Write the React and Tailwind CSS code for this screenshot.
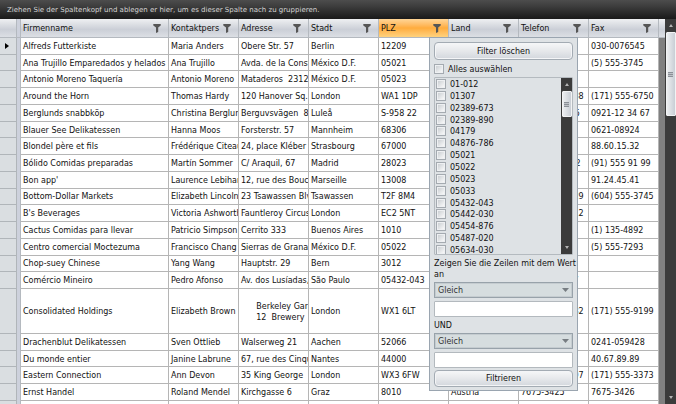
import React from "react";

const columns = ["Firmenname", "Kontaktpers", "Adresse", "Stadt", "PLZ", "Land", "Telefon", "Fax"];

const rows = [
  ["Alfreds Futterkiste", "Maria Anders", "Obere Str. 57", "Berlin", "12209", "Germany", "030-0074321", "030-0076545"],
  ["Ana Trujillo Emparedados y helados", "Ana Trujillo", "Avda. de la Constitución 2222", "México D.F.", "05021", "Mexico", "(5) 555-4729", "(5) 555-3745"],
  ["Antonio Moreno Taquería", "Antonio Moreno", "Mataderos  2312", "México D.F.", "05023", "Mexico", "(5) 555-3932", ""],
  ["Around the Horn", "Thomas Hardy", "120 Hanover Sq.", "London", "WA1 1DP", "UK", "(171) 555-7788", "(171) 555-6750"],
  ["Berglunds snabbköp", "Christina Berglund", "Berguvsvägen  8", "Luleå", "S-958 22", "Sweden", "0921-12 34 65", "0921-12 34 67"],
  ["Blauer See Delikatessen", "Hanna Moos", "Forsterstr. 57", "Mannheim", "68306", "Germany", "0621-08460", "0621-08924"],
  ["Blondel père et fils", "Frédérique Citeaux", "24, place Kléber", "Strasbourg", "67000", "France", "88.60.15.31", "88.60.15.32"],
  ["Bólido Comidas preparadas", "Martín Sommer", "C/ Araquil, 67", "Madrid", "28023", "Spain", "(91) 555 22 82", "(91) 555 91 99"],
  ["Bon app'", "Laurence Lebihan", "12, rue des Bouchers", "Marseille", "13008", "France", "91.24.45.40", "91.24.45.41"],
  ["Bottom-Dollar Markets", "Elizabeth Lincoln", "23 Tsawassen Blvd.", "Tsawassen", "T2F 8M4", "Canada", "(604) 555-4729", "(604) 555-3745"],
  ["B's Beverages", "Victoria Ashworth", "Fauntleroy Circus", "London", "EC2 5NT", "UK", "(171) 555-1212", ""],
  ["Cactus Comidas para llevar", "Patricio Simpson", "Cerrito 333", "Buenos Aires", "1010", "Argentina", "(1) 135-5555", "(1) 135-4892"],
  ["Centro comercial Moctezuma", "Francisco Chang", "Sierras de Granada 9993", "México D.F.", "05022", "Mexico", "(5) 555-3392", "(5) 555-7293"],
  ["Chop-suey Chinese", "Yang Wang", "Hauptstr. 29", "Bern", "3012", "Switzerland", "0452-076545", ""],
  ["Comércio Mineiro", "Pedro Afonso", "Av. dos Lusíadas, 23", "São Paulo", "05432-043", "Brazil", "(11) 555-7647", ""],
  ["Consolidated Holdings", "Elizabeth Brown", "      Berkeley Gardens\n      12  Brewery", "London", "WX1 6LT", "UK", "(171) 555-2282", "(171) 555-9199"],
  ["Drachenblut Delikatessen", "Sven Ottlieb", "Walserweg 21", "Aachen", "52066", "Germany", "0241-039123", "0241-059428"],
  ["Du monde entier", "Janine Labrune", "67, rue des Cinquante Otages", "Nantes", "44000", "France", "40.67.88.88", "40.67.89.89"],
  ["Eastern Connection", "Ann Devon", "35 King George", "London", "WX3 6FW", "UK", "(171) 555-0297", "(171) 555-3373"],
  ["Ernst Handel", "Roland Mendel", "Kirchgasse 6", "Graz", "8010", "Austria", "7675-3425", "7675-3426"],
  ["", "", "", "", "", "", "", ""],
];

const codes = [
  "01-012", "01307", "02389-673", "02389-890", "04179", "04876-786", "05021", "05022",
  "05023", "05033", "05432-043", "05442-030", "05454-876", "05487-020", "05634-030",
];

const panelButton =
  "block w-full rounded-sm border border-[#a3abb3] bg-linear-to-b from-[#f6f7f8] via-[#e6e8eb] via-50% to-[#d3d7dd] text-center shadow-[inset_0_0_0_1px_#f4f5f7]";

function FilterIcon() {
  return (
    <svg viewBox="0 0 8 9" className="h-[9px] w-2 shrink-0" fill="#555" aria-hidden="true">
      <path d="M0.3 0h7.4v1.6L5.2 3.4V8L3 9V3.4L0.3 1.6z" />
    </svg>
  );
}

function Tick({ label }) {
  return (
    <label className="flex items-center gap-1">
      <input
        type="checkbox"
        className="size-[10px] shrink-0 appearance-none border border-[#a4aab0] bg-linear-to-br from-[#c4c9cd] to-white shadow-[inset_0_0_0_1px_#eef0f2]"
      />
      <span className="pt-px">{label}</span>
    </label>
  );
}

function ScrollBar({ thumb }) {
  return (
    <div className="flex h-full w-[11px] shrink-0 flex-col items-center bg-[#3b3b3b]">
      <button type="button" aria-label="Nach oben" className="flex h-[13px] w-full shrink-0 items-center justify-center">
        <svg viewBox="0 0 4 3" className="h-[3px] w-1" fill="#b4b4b4"><path d="M2 0l2 3H0z" /></svg>
      </button>
      <div className={`flex w-[10px] shrink-0 items-center justify-center rounded-[1px] border border-[#f2f3f4] bg-linear-to-r from-[#eceef0] to-[#c9ced5] ${thumb}`}>
        <div className="h-[5px] w-[5px] border-y border-[#8b9097] bg-linear-to-b from-[#d8dbe0] via-[#8b9097] to-[#d8dbe0]" />
      </div>
      <button type="button" aria-label="Nach unten" className="mt-auto flex h-[13px] w-full shrink-0 items-center justify-center">
        <svg viewBox="0 0 4 3" className="h-[3px] w-1" fill="#b4b4b4"><path d="M0 0h4L2 3z" /></svg>
      </button>
    </div>
  );
}

function Condition({ name }) {
  return (
    <>
      <div className="relative">
        <select aria-label={name} className="block h-4 w-full appearance-none border border-[#98a2aa] bg-[#d6dddf] pl-[3px] text-[#333] shadow-[inset_0_0_0_1px_#c5ccd0]">
          <option>Gleich</option>
          <option>Ungleich</option>
        </select>
        <svg viewBox="0 0 7 4" className="pointer-events-none absolute top-1.5 right-1 h-1 w-[7px]" fill="#777d82"><path d="M0 0h7L3.5 4z" /></svg>
      </div>
      <input type="text" aria-label={`${name} Wert`} className="mt-[3px] block h-4 w-full rounded-[1px] border border-[#b3b9be] bg-white px-1" />
    </>
  );
}

function FilterPanel() {
  return (
    <form className="absolute top-[37px] left-[429px] w-[149px] border border-[#9aa5b0] bg-[#dee2e5] px-1 pt-1 pb-[3px] leading-[11px]">
      <button type="button" className={`${panelButton} h-[18px]`}>Filter löschen</button>
      <div className="mt-0.5 flex h-[13px] items-center">
        <Tick label="Alles auswählen" />
      </div>
      <div className="mt-0.5 flex h-[178px] overflow-hidden rounded-[1px] border border-[#b4babf] pl-px">
        <ul className="grid h-[178px] flex-1 auto-rows-fr">
          {codes.map((code) => (
            <li key={code} className="flex min-h-0 items-center">
              <Tick label={code} />
            </li>
          ))}
        </ul>
        <ScrollBar thumb="h-[26px]" />
      </div>
      <p className="-mr-1 mt-[3px] mb-0.5 whitespace-nowrap">
        Zeigen Sie die Zeilen mit dem Wert
        <br />
        an
      </p>
      <Condition name="Erste Bedingung" />
      <p className="mt-[3px] mb-0.5">UND</p>
      <Condition name="Zweite Bedingung" />
      <button type="button" className={`${panelButton} mt-0.5 h-[17px]`}>Filtrieren</button>
    </form>
  );
}

export default function App() {
  return (
    <div className="relative flex h-screen flex-col overflow-hidden bg-[#808080] font-['DejaVu_Sans','Verdana',sans-serif] text-[8px] text-[#111]">
      <div className="h-[19px] shrink-0 truncate bg-linear-to-b from-[#4d4d4d] via-[#3c3c3c] via-35% to-[#1a1a1a] pt-px pl-[7px] text-[7px] leading-[18px] text-[#d4d4d4]">
        Ziehen Sie der Spaltenkopf und ablegen er hier, um es dieser Spalte nach zu gruppieren.
      </div>
      <div className="flex min-h-0 flex-1">
        <div className="min-w-0 flex-1 overflow-hidden">
          <table className="h-[399px] w-full table-fixed border-separate border-spacing-0">
            <colgroup>
              <col className="w-[17px]" />
              <col className="w-1" />
              <col className="w-[148px]" />
              {columns.slice(1).map((c) => <col key={c} className="w-[70px]" />)}
              <col />
            </colgroup>
            <thead>
              <tr className="h-[19px] bg-linear-to-b from-[#eff0f2] via-[#cbcfd7] via-55% to-[#dee1e6]">
                <th className="border-r border-b border-[#b4b9bf] p-0" />
                <th className="border-r border-b border-[#b4b9bf] bg-[#cdd1dc] p-0" />
                {columns.map((c) => (
                  <th
                    key={c}
                    className={`border-r border-b border-[#b4b9bf] p-0 font-normal ${c === "PLZ" ? "bg-linear-to-b from-[#ffd596] via-[#ffac3c] via-50% to-[#ffd27d]" : ""}`}
                  >
                    <div className="flex items-center justify-between pr-[7px] pl-0.5 leading-[17px]">
                      <span className="pt-px">{c}</span>
                      <FilterIcon />
                    </div>
                  </th>
                ))}
                <th className="border-b border-[#b4b9bf] p-0" />
              </tr>
            </thead>
            <tbody>
              {rows.map((row, i) => (
                <tr key={i} className={i === 15 ? "h-[43px]" : "h-4"}>
                  <td className="border-r border-b border-[#b0b5b9] bg-[#dadee1] p-0">
                    {i === 0 && (
                      <svg viewBox="0 0 4 6" className="ml-[5px] h-1.5 w-1" fill="#000"><path d="M0 0l4 3-4 3z" /></svg>
                    )}
                  </td>
                  <td className="border-r border-[#b4b9bf] bg-[#cdd1dc] p-0" />
                  {row.map((cell, j) => (
                    <td key={j} className="overflow-hidden border-r border-b border-[#b5b5b5] bg-white p-0 pt-px pl-0.5 leading-[11px] whitespace-pre">
                      {cell}
                    </td>
                  ))}
                  <td className="p-0" />
                </tr>
              ))}
            </tbody>
          </table>
        </div>
        <ScrollBar thumb="h-[84px]" />
      </div>
      <FilterPanel />
    </div>
  );
}
